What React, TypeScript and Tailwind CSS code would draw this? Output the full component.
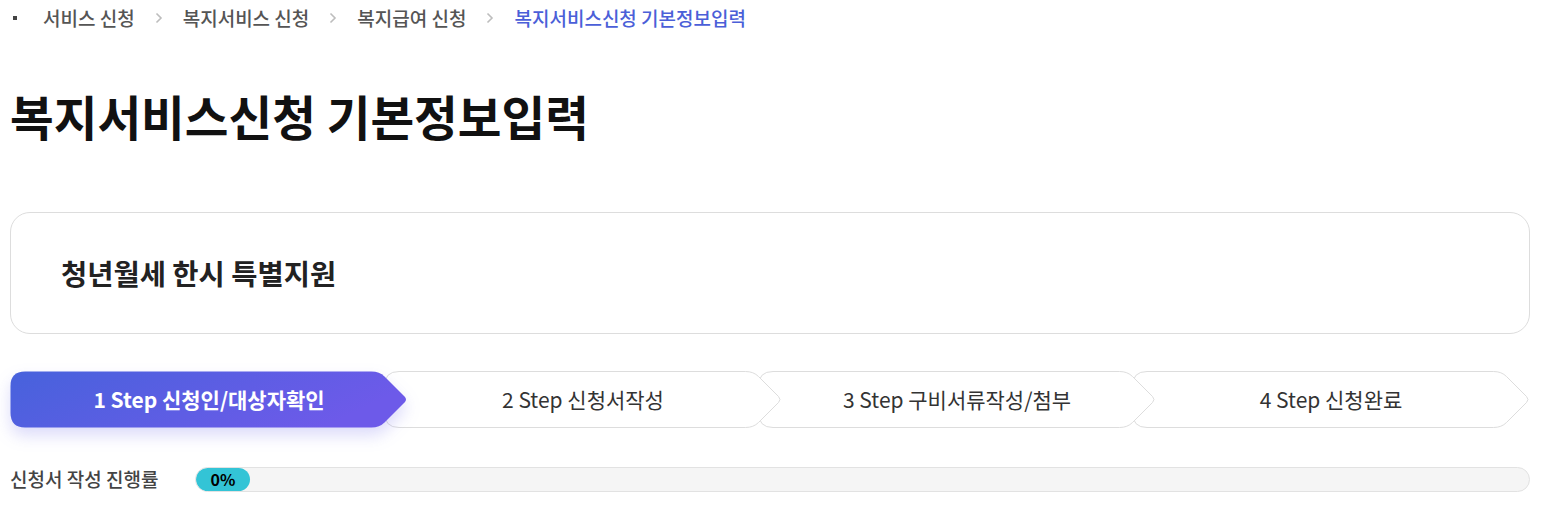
import React from 'react';

const FONT = '"Noto Sans CJK KR", "Noto Sans", sans-serif';

const crumbs = ['서비스 신청', '복지서비스 신청', '복지급여 신청'];

const steps = [
  { label: '1 Step 신청인/대상자확인', active: true },
  { label: '2 Step 신청서작성', active: false },
  { label: '3 Step 구비서류작성/첨부', active: false },
  { label: '4 Step 신청완료', active: false },
];

const zClasses = ['z-40', 'z-30', 'z-20', 'z-10'];

// chevron outline for a step, W x H
const stepPath = (W: number, H: number) => {
  const d = 28;
  const t = 0.5;
  const b = H - 0.5;
  const m = H / 2;
  const x = W - 0.5;
  return [
    `M 15 ${t}`,
    `L ${x - d - 8} ${t}`,
    `Q ${x - d} ${t} ${x - d + 5} ${t + 5}`,
    `L ${x - 3} ${m - 3}`,
    `Q ${x} ${m} ${x - 3} ${m + 3}`,
    `L ${x - d + 5} ${b - 5}`,
    `Q ${x - d} ${b} ${x - d - 8} ${b}`,
    `L 15 ${b}`,
    `Q 0.5 ${b} 0.5 ${b - 15}`,
    `L 0.5 15`,
    `Q 0.5 ${t} 15 ${t}`,
    'Z',
  ].join(' ');
};

const StepItem: React.FC<{ label: string; active: boolean; index: number }> = ({ label, active, index }) => {
  const W = 398;
  const H = 57;
  return (
    <div className={`relative h-[57px] w-[398px] shrink-0 ${zClasses[index]} ${index > 0 ? '-ml-[24px]' : ''}`}>
      <svg
        width={W}
        height={H}
        viewBox={`0 0 ${W} ${H}`}
        className={`absolute inset-0 overflow-visible ${active ? 'drop-shadow-[0_8px_8px_rgba(96,90,230,0.22)]' : ''}`}
      >
        <defs>
          <linearGradient id="stepGrad" x1="0" y1="0" x2="1" y2="0.3">
            <stop offset="0%" stopColor="#4762dc" />
            <stop offset="100%" stopColor="#6d5ae9" />
          </linearGradient>
        </defs>
        <path
          d={stepPath(W, H)}
          fill={active ? 'url(#stepGrad)' : '#ffffff'}
          stroke={active ? 'none' : '#dddddd'}
          strokeWidth={1}
        />
      </svg>
      <div
        className={`relative flex h-full items-center justify-center text-[21px] ${
          active ? 'font-bold text-white' : 'font-normal text-[#333]'
        }`}
      >
        {label}
      </div>
    </div>
  );
};

const App: React.FC = () => {
  return (
    <div className="min-h-[522px] w-[1540px] bg-white px-[10px]" style={{ fontFamily: FONT }}>
      {/* breadcrumb */}
      <div className="flex h-[36px] items-center text-[19px] font-medium text-[#555]">
        <span className="ml-[3px] mr-[26px] h-[4px] w-[4px] bg-[#444]" />
        {crumbs.map(c => (
          <React.Fragment key={c}>
            <span>{c}</span>
            <svg width="8" height="12" viewBox="0 0 8 12" className="mx-[20px]">
              <polyline points="1.5,1.5 6,6 1.5,10.5" fill="none" stroke="#bdbdbd" strokeWidth="1.6" />
            </svg>
          </React.Fragment>
        ))}
        <span className="text-[#4b5fd8]">복지서비스신청 기본정보입력</span>
      </div>

      {/* title */}
      <h1 className="mt-[52px] text-[47.5px] font-bold leading-[56px] text-[#111]">
        복지서비스신청 기본정보입력
      </h1>

      {/* program card */}
      <div className="mt-[68px] flex h-[122px] items-center rounded-[20px] border border-[#dddddd] px-[50px]">
        <h2 className="text-[28.5px] font-bold text-[#222]">청년월세 한시 특별지원</h2>
      </div>

      {/* steps */}
      <div className="mt-[37px] flex">
        {steps.map((s, i) => (
          <StepItem key={s.label} label={s.label} active={s.active} index={i} />
        ))}
      </div>

      {/* progress */}
      <div className="mt-[37px] flex items-center">
        <span className="w-[185px] shrink-0 text-[19px] font-medium text-[#444]">신청서 작성 진행률</span>
        <div className="h-[25px] flex-1 overflow-hidden rounded-full border border-[#e2e2e2] bg-[#f5f5f5]">
          <div className="flex h-full w-[54px] items-center justify-center rounded-full bg-[#33c4d6] text-[16px] font-semibold text-black">
            0%
          </div>
        </div>
      </div>
    </div>
  );
};

export default App;
